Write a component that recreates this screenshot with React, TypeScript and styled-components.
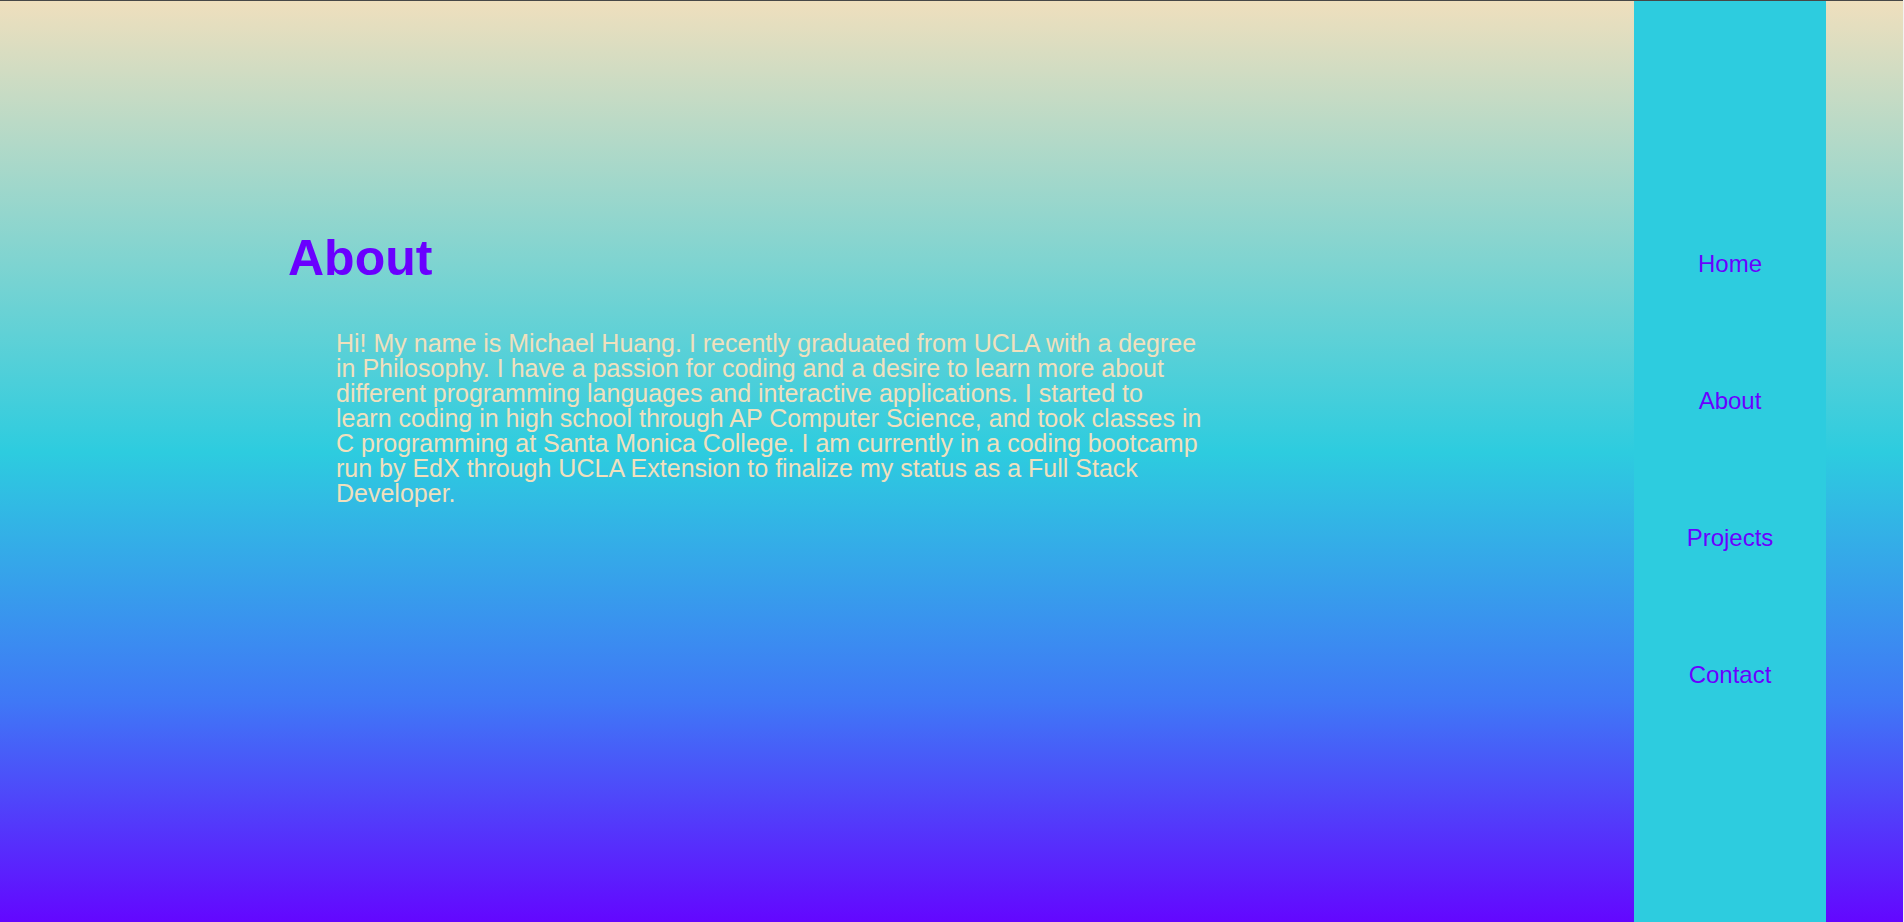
import React from "react";
import styled, { createGlobalStyle } from "styled-components";

const GlobalStyle = createGlobalStyle`
  html, body {
    margin: 0;
    padding: 0;
    background: #f1f1f1;
  }
  body {
    font-family: "Liberation Sans", Arial, sans-serif;
  }
  * { box-sizing: border-box; }
`;

const Page = styled.div`
  display: flex;
  height: 100vh;
  width: calc(100% - 1px);
  border-top: 1px solid #474747;
  background: linear-gradient(to bottom, #efdfbd 0%, #2dccdf 49%, #3f78f6 76%, #6307ff 100%);
`;

const Main = styled.main`
  flex: 1;
  padding-top: 230px;
`;

const Heading = styled.h1`
  margin: 0 0 0 288px;
  font-size: 50px;
  line-height: 55px;
  font-weight: bold;
  color: #6a00ff;
`;

const Bio = styled.p`
  margin: 45px 0 0 336px;
  width: 866px;
  font-size: 25px;
  line-height: 25px;
  color: #f0e0bd;
`;

const Sidebar = styled.nav`
  width: 192px;
  background: #2dccdf;
  display: flex;
  flex-direction: column;
  align-items: center;
  gap: 109px;
  padding-top: 249px;
`;

const NavLink = styled.a`
  font-size: 24px;
  line-height: 28px;
  color: #6a00ff;
  text-decoration: none;
  cursor: pointer;
`;

const Spacer = styled.div`
  width: 77px;
`;

export default function App() {
  return (
    <>
      <GlobalStyle />
      <Page>
        <Main>
          <Heading>About</Heading>
          <Bio>
            Hi! My name is Michael Huang. I recently graduated from UCLA with a degree in Philosophy. I have a
            passion for coding and a desire to learn more about different programming languages and interactive
            applications. I started to learn coding in high school through AP Computer Science, and took classes in
            C programming at Santa Monica College. I am currently in a coding bootcamp run by EdX through UCLA
            Extension to finalize my status as a Full Stack Developer.
          </Bio>
        </Main>
        <Sidebar>
          <NavLink>Home</NavLink>
          <NavLink>About</NavLink>
          <NavLink>Projects</NavLink>
          <NavLink>Contact</NavLink>
        </Sidebar>
        <Spacer />
      </Page>
    </>
  );
}
